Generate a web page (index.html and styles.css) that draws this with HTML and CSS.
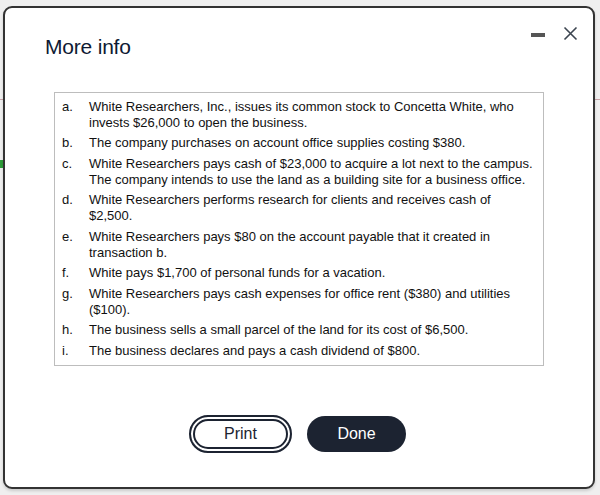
FILE: index.html
```html
<!DOCTYPE html>
<html>
<head>
<meta charset="utf-8">
<link rel="stylesheet" href="styles.css">
</head>
<body>
<div class="modal">
  <div class="header">
    <h1 class="title">More info</h1>
    <div class="controls">
      <span class="minimize"></span>
      <svg class="close" width="15" height="15" viewBox="0 0 15 15"><path d="M1.5 1.5 L13.5 13.5 M13.5 1.5 L1.5 13.5" stroke="#3c4550" stroke-width="1.6" fill="none"/></svg>
    </div>
  </div>
  <div class="box">
    <ol class="list">
      <li><span class="lbl">a.</span><span class="txt">White Researchers, Inc., issues its common stock to Concetta White, who invests $26,000 to open the business.</span></li>
      <li><span class="lbl">b.</span><span class="txt">The company purchases on account office supplies costing $380.</span></li>
      <li><span class="lbl">c.</span><span class="txt">White Researchers pays cash of $23,000 to acquire a lot next to the campus. The company intends to use the land as a building site for a business office.</span></li>
      <li><span class="lbl">d.</span><span class="txt">White Researchers performs research for clients and receives cash of $2,500.</span></li>
      <li><span class="lbl">e.</span><span class="txt">White Researchers pays $80 on the account payable that it created in transaction b.</span></li>
      <li><span class="lbl">f.</span><span class="txt">White pays $1,700 of personal funds for a vacation.</span></li>
      <li><span class="lbl">g.</span><span class="txt">White Researchers pays cash expenses for office rent ($380) and utilities ($100).</span></li>
      <li><span class="lbl">h.</span><span class="txt">The business sells a small parcel of the land for its cost of $6,500.</span></li>
      <li><span class="lbl">i.</span><span class="txt">The business declares and pays a cash dividend of $800.</span></li>
    </ol>
  </div>
  <div class="actions">
    <button class="btn btn-print">Print</button>
    <button class="btn btn-done">Done</button>
  </div>
</div>
</body>
</html>
```
FILE: styles.css
```css
html, body {
  margin: 0;
  padding: 0;
}
body {
  width: 600px;
  height: 495px;
  overflow: hidden;
  background-color: #efefef;
  background-image:
    linear-gradient(to bottom, transparent 99px, #c9a3a8 99px, #c9a3a8 100px, transparent 100px),
    linear-gradient(to bottom, transparent 160px, #2e9e3a 160px, #2e9e3a 168px, transparent 168px);
  background-size: 100% 100%, 3px 100%;
  background-repeat: no-repeat;
  font-family: "Liberation Sans", Arial, sans-serif;
  padding-top: 6px;
  padding-left: 3px;
  box-sizing: border-box;
}
.modal {
  width: 592px;
  height: 483px;
  box-sizing: border-box;
  border: 2px solid #333;
  border-radius: 9px;
  background: #fff;
  display: flex;
  flex-direction: column;
  box-shadow: 0 2px 3px rgba(0,0,0,0.15);
}
.header {
  display: flex;
  justify-content: space-between;
  align-items: flex-start;
  height: 84px;
  padding: 0 15px 0 40px;
}
.title {
  margin: 27px 0 0 0;
  font-size: 21px;
  font-weight: normal;
  color: #0e1a33;
  letter-spacing: -0.2px;
}
.controls {
  display: flex;
  align-items: center;
  gap: 18px;
  margin-top: 18px;
}
.minimize {
  display: block;
  width: 14px;
  height: 4px;
  background: #555;
  margin-top: 2px;
}
.close {
  display: block;
}
.box {
  margin-left: 49px;
  width: 490px;
  height: 274px;
  box-sizing: border-box;
  border: 1px solid #bdbdbd;
  padding: 6px 8px 0 7px;
}
.list {
  list-style: none;
  margin: 0;
  padding: 0;
  display: flex;
  flex-direction: column;
  gap: 4.3px;
  font-size: 13px;
  line-height: 16.1px;
  color: #111;
}
.list li {
  display: flex;
}
.lbl {
  width: 27px;
  flex: none;
}
.txt {
  flex: 1;
}
.actions {
  display: flex;
  justify-content: center;
  gap: 15px;
  margin-top: 50px;
  padding-right: 3px;
}
.btn {
  font-family: "Liberation Sans", Arial, sans-serif;
  font-size: 16px;
  border-radius: 20px;
  cursor: pointer;
}
.btn-print {
  width: 103px;
  height: 38px;
  background: #fff;
  color: #1c2331;
  border: 2px solid #1c2331;
  box-shadow: inset 0 0 0 2px #fff, inset 0 0 0 4px #1c2331;
  margin-top: -1px;
}
.btn-done {
  width: 99px;
  height: 36px;
  background: #1c2331;
  color: #fff;
  border: none;
}
```
